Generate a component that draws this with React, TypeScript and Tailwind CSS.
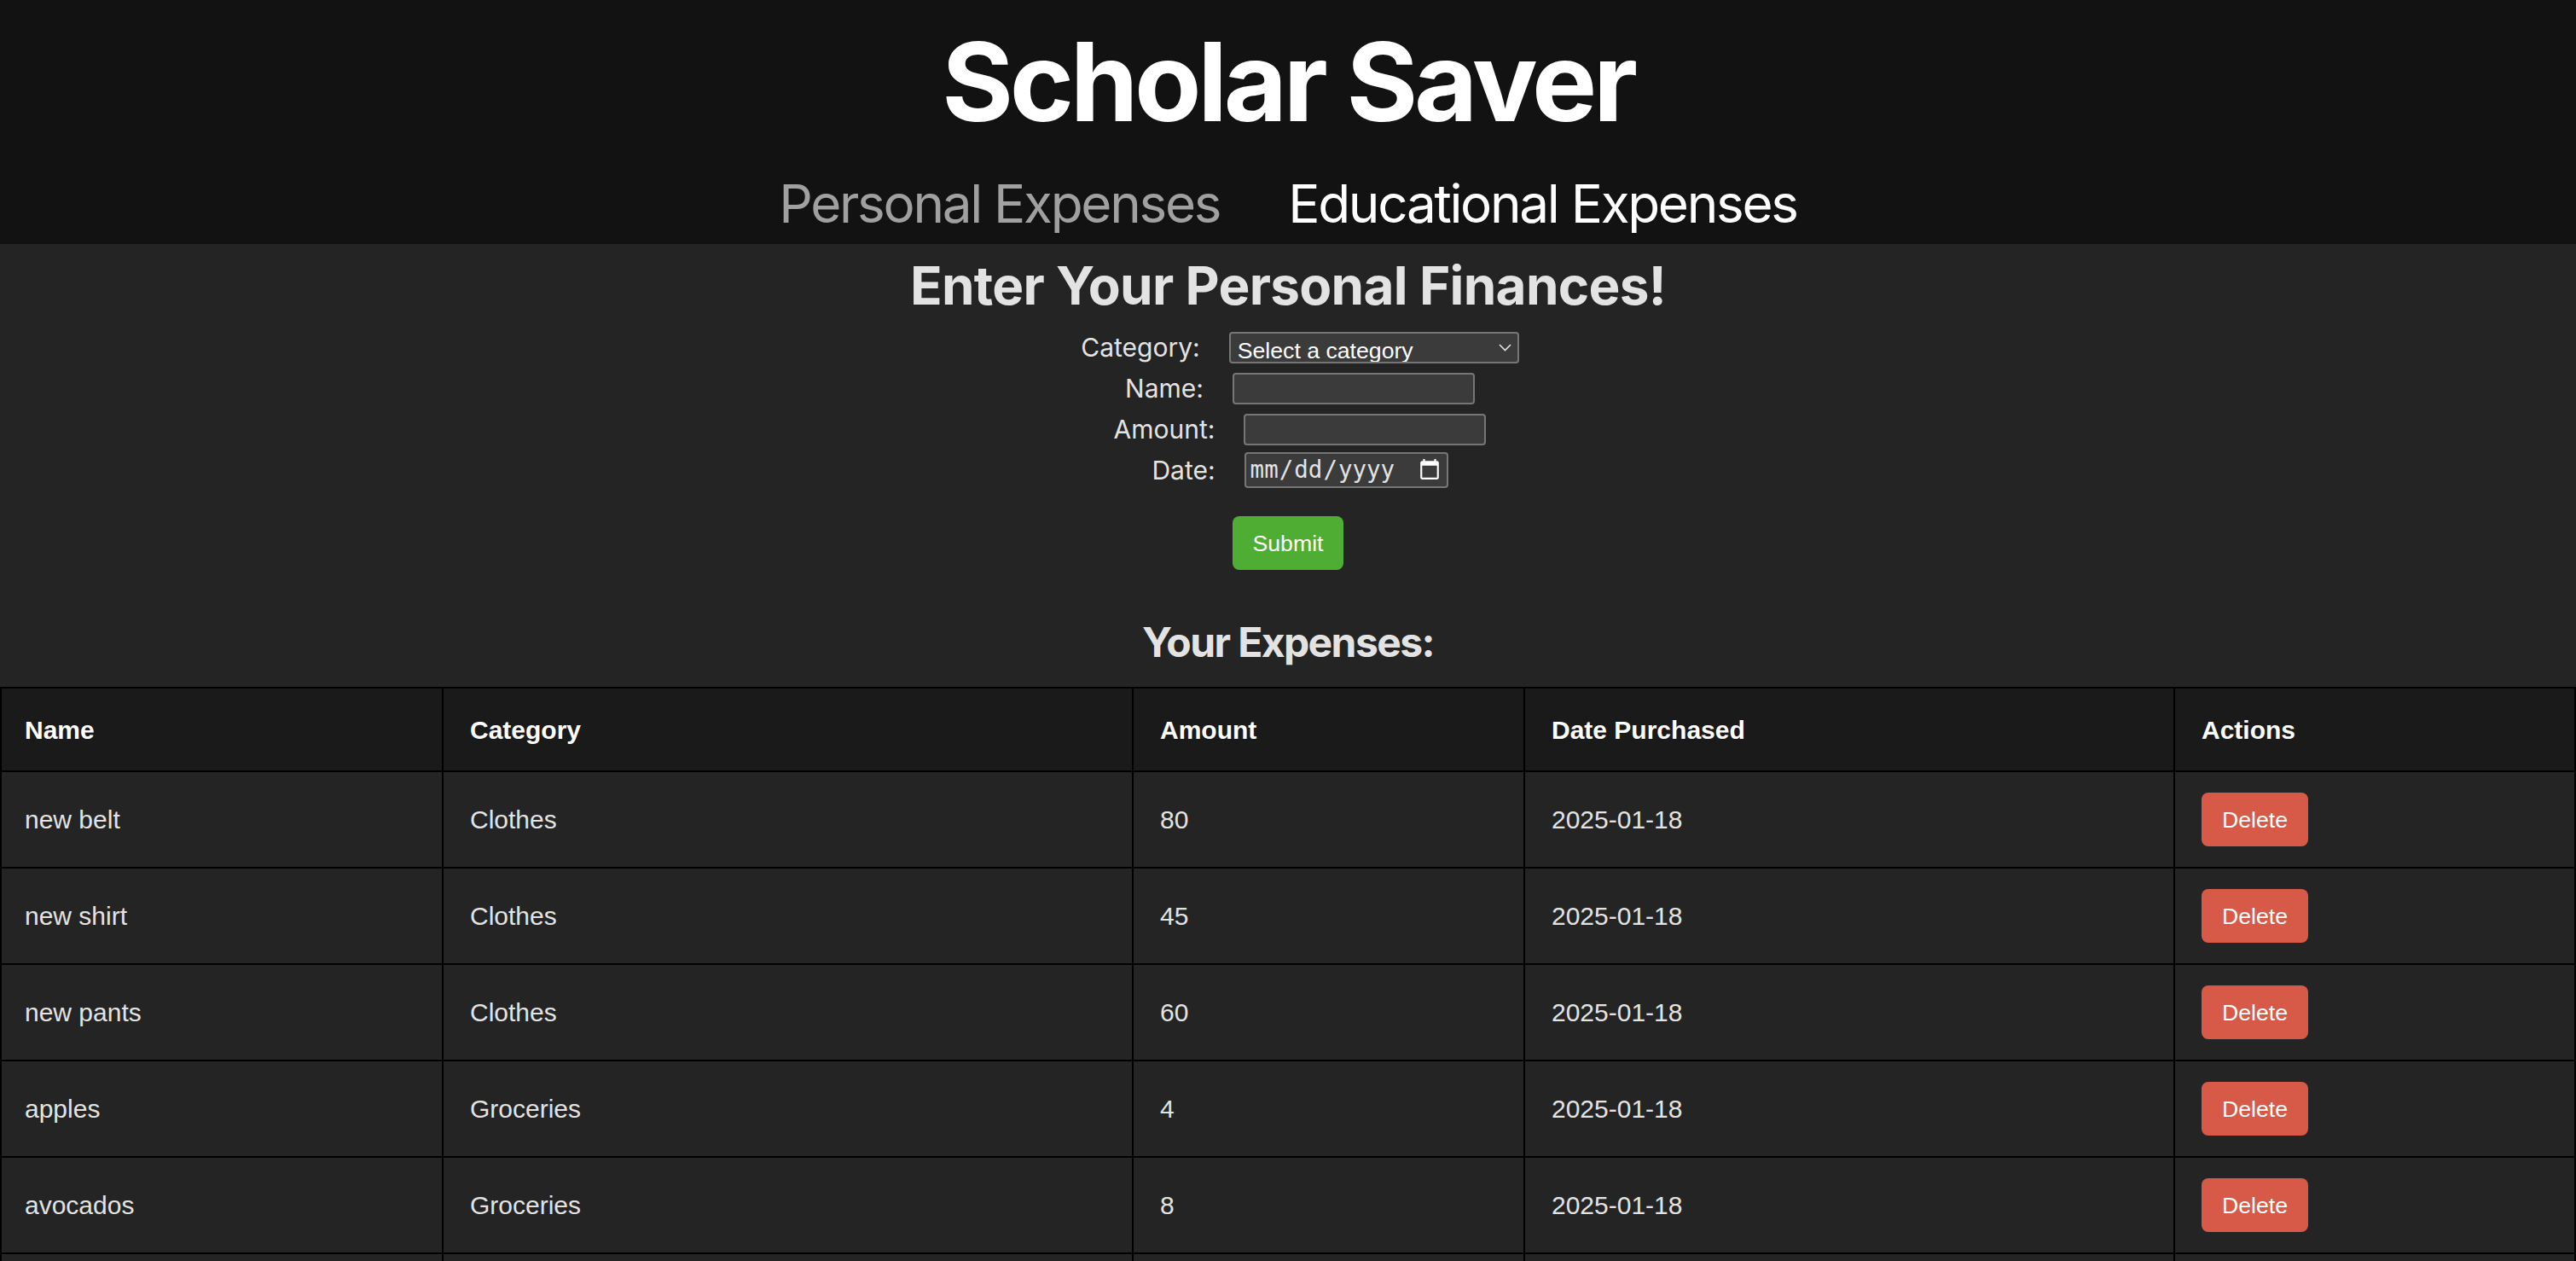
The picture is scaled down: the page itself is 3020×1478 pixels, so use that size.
import { useState } from 'react';

type Expense = {
  name: string;
  category: string;
  amount: number;
  date: string;
};

const initialExpenses: Expense[] = [
  { name: 'new belt', category: 'Clothes', amount: 80, date: '2025-01-18' },
  { name: 'new shirt', category: 'Clothes', amount: 45, date: '2025-01-18' },
  { name: 'new pants', category: 'Clothes', amount: 60, date: '2025-01-18' },
  { name: 'apples', category: 'Groceries', amount: 4, date: '2025-01-18' },
  { name: 'avocados', category: 'Groceries', amount: 8, date: '2025-01-18' },
  { name: 'bread', category: 'Groceries', amount: 5, date: '2025-01-18' },
];

const inputClass =
  "h-[37px] rounded-[4px] border-2 border-[#767676] bg-[#3b3b3b] px-[8px] font-['Liberation_Sans'] text-[26.67px] text-white outline-none";

export default function App() {
  const [expenses, setExpenses] = useState<Expense[]>(initialExpenses);
  const [category, setCategory] = useState('');
  const [name, setName] = useState('');
  const [amount, setAmount] = useState('');
  const [date, setDate] = useState('');

  const handleDelete = (index: number) => {
    setExpenses((prev) => prev.filter((_, i) => i !== index));
  };

  return (
    <div className="min-h-screen bg-[#242424] font-['Inter',sans-serif] text-[#e3e3e3] [color-scheme:dark]">
      <header className="flex flex-col items-center bg-[#121212] pt-[32px] pb-[16px]">
        <h1 className="text-[128px] font-bold leading-none tracking-[-4.3px] text-white">
          Scholar Saver
        </h1>
        <nav className="mt-[48px] flex gap-[80px] text-[62px] leading-none tracking-[-2.3px]">
          <a className="text-[#a0a0a0]">Personal Expenses</a>
          <a className="text-white">Educational Expenses</a>
        </nav>
      </header>

      <main className="flex flex-col items-center">
        <h2 className="mt-[18px] text-[62px] font-bold leading-none tracking-[-0.7px] text-[#e3e3e3]">
          Enter Your Personal Finances!
        </h2>

        <form
          className="mt-[17px] flex flex-col items-center"
          onSubmit={(e) => e.preventDefault()}
        >
          <div className="flex h-[48px] items-center justify-center gap-[34px] pl-[28px] text-[30px]">
            <label>Category:</label>
            <div className="relative">
              <select
                value={category}
                onChange={(e) => setCategory(e.target.value)}
                className={`${inputClass} block h-[36px] w-[340px] appearance-none pr-[40px]`}
              >
                <option value="">Select a category</option>
                <option value="Clothes">Clothes</option>
                <option value="Groceries">Groceries</option>
                <option value="Entertainment">Entertainment</option>
              </select>
              <svg
                className="pointer-events-none absolute right-[9px] top-[14px]"
                width="15"
                height="9"
                viewBox="0 0 15 9"
                fill="none"
              >
                <polyline points="1,1 7.5,7.5 14,1" stroke="#e0e0e0" strokeWidth="1.6" />
              </svg>
            </div>
          </div>

          <div className="flex h-[48px] items-center justify-center gap-[34px] pl-[28px] text-[30px]">
            <label>Name:</label>
            <input
              type="text"
              value={name}
              onChange={(e) => setName(e.target.value)}
              className={`${inputClass} w-[284px]`}
            />
          </div>

          <div className="flex h-[48px] items-center justify-center gap-[34px] pl-[28px] text-[30px]">
            <label>Amount:</label>
            <input
              type="number"
              value={amount}
              onChange={(e) => setAmount(e.target.value)}
              className={`${inputClass} w-[284px]`}
            />
          </div>

          <div className="flex h-[48px] items-center justify-center gap-[34px] pl-[28px] text-[30px]">
            <label>Date:</label>
            <input
              type="date"
              value={date}
              onChange={(e) => setDate(e.target.value)}
              className="h-[42px] w-[239px] rounded-[4px] border-2 border-[#767676] bg-[#3b3b3b] px-[4px] font-['DejaVu_Sans_Mono',monospace] text-[27.5px] text-[#e3e3e3] outline-none"
            />
          </div>

          <button
            type="submit"
            className="mt-[30px] h-[63px] w-[130px] rounded-[8px] bg-[#50ad33] font-['Liberation_Sans'] text-[26.67px] text-white"
          >
            Submit
          </button>
        </form>

        <h2 className="mt-[61px] text-[48px] font-bold leading-none tracking-[-1.6px] text-[#e3e3e3]">
          Your Expenses:
        </h2>

        <table className="mt-[28px] w-full border-collapse font-['Liberation_Sans',Arial,sans-serif] text-[30px]">
          <thead>
            <tr className="h-[98px] bg-[#1a1a1a] text-left">
              <th className="w-[518px] border-2 border-black px-[27px] font-bold text-white">Name</th>
              <th className="w-[809px] border-2 border-black px-[31px] font-bold text-white">Category</th>
              <th className="w-[459px] border-2 border-black px-[31px] font-bold text-white">Amount</th>
              <th className="w-[762px] border-2 border-black px-[31px] font-bold text-white">Date Purchased</th>
              <th className="border-2 border-black px-[31px] font-bold text-white">Actions</th>
            </tr>
          </thead>
          <tbody>
            {expenses.map((expense, index) => (
              <tr key={index} className="h-[113px] bg-[#242424]">
                <td className="border-2 border-black px-[27px]">{expense.name}</td>
                <td className="border-2 border-black px-[31px]">{expense.category}</td>
                <td className="border-2 border-black px-[31px]">{expense.amount}</td>
                <td className="border-2 border-black px-[31px]">{expense.date}</td>
                <td className="border-2 border-black px-[31px]">
                  <button
                    onClick={() => handleDelete(index)}
                    className="h-[63px] w-[125px] rounded-[8px] bg-[#d75a48] text-[26.67px] text-white"
                  >
                    Delete
                  </button>
                </td>
              </tr>
            ))}
          </tbody>
        </table>
      </main>
    </div>
  );
}
